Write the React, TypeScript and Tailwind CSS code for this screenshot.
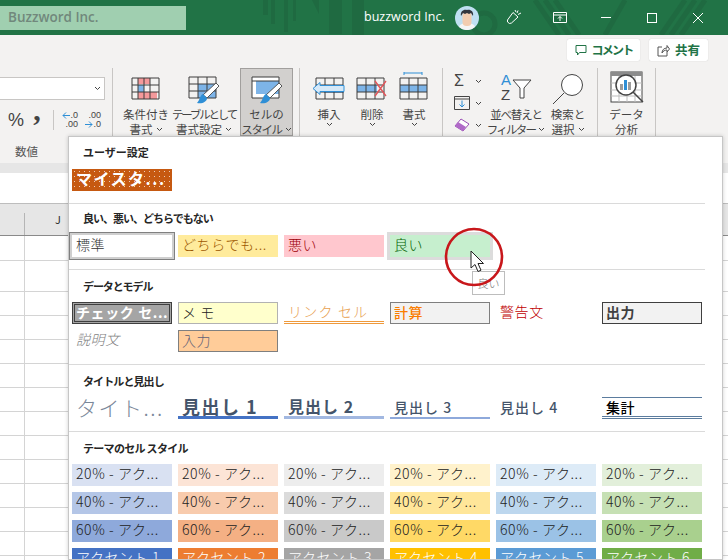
import type { ReactNode } from "react";

const jp = "font-['Noto_Sans_CJK_JP','Noto_Sans',sans-serif]";

function TitleArt() {
  // faint circuit pattern behind the title bar
  return (
    <svg className="absolute left-0 top-0" width="728" height="35" viewBox="0 0 728 35" fill="none">
      <g fill="#1f6a41">
        <rect x="263" y="0" width="5" height="15" />
        <rect x="271" y="0" width="4" height="24" />
        <rect x="284" y="0" width="4" height="32" />
        <rect x="293" y="0" width="3" height="21" />
        <path d="M312 0h7v14z" />
        <rect x="329" y="0" width="13" height="34" />
        <rect x="352" y="0" width="12" height="35" />
      </g>
      <g stroke="#1f6a41" strokeWidth="5">
        <circle cx="484" cy="24" r="11" />
        <path d="M535 0l24 35M545 0l24 35M555 0l24 35M625 0l-20 35M685 0l-24 35M695 0l-24 35M705 0l-24 35" />
      </g>
    </svg>
  );
}

function Avatar() {
  return (
    <svg width="24" height="24" viewBox="0 0 24 24" className="relative">
      <circle cx="12" cy="12" r="12" fill="#bfe0f2" />
      <path d="M4 21c1-3 4-4 8-4s7 1 8 4a12 12 0 0 1-16 0z" fill="#f5f5f5" />
      <rect x="7.5" y="6" width="9" height="14" rx="4" fill="#f3cdb0" />
      <path d="M6 10c-1-5 3-7 6-6 3-1 7 1 6 6l-2-3-2 1-2-1-2 1-2-1z" fill="#33363d" />
    </svg>
  );
}

function CondIcon() {
  return (
    <svg width="30" height="24" viewBox="0 0 30 24" fill="none">
      <rect x="7" y="1" width="12" height="6" fill="#f4999b" />
      <rect x="7" y="8" width="6" height="7" fill="#7db4e8" />
      <rect x="7" y="15" width="19" height="7" fill="#f4999b" />
      <path d="M1 1h27v21H1zM1 8h27M1 15h27M7 1v21M13 1v21M19 1v21" stroke="#3c3c3c" />
    </svg>
  );
}

function Brush() {
  return (
    <g>
      <path d="M15 19l13-12 3 3-12 12z" fill="#fff" stroke="#555" />
      <path d="M9 27c5 1 10-1 10-5l-4-4c-3 1-3 6-6 9z" fill="#2f8fd6" />
    </g>
  );
}

function TableIcon() {
  return (
    <svg width="32" height="28" viewBox="0 0 32 28" fill="none" className="-mb-[3px]">
      <rect x="10" y="8" width="18" height="14" fill="#7db4e8" />
      <path d="M1 1h27v21H1zM1 8h27M1 15h27M10 1v21M19 1v21" stroke="#3c3c3c" />
      <Brush />
    </svg>
  );
}

function StyleIcon() {
  return (
    <svg width="32" height="28" viewBox="0 0 32 28" fill="none" className="-mb-[3px]">
      <rect x="1" y="1" width="27" height="21" fill="#fff" />
      <rect x="5" y="5" width="23" height="13" fill="#7db4e8" />
      <path d="M1 1h27v21H1zM1 5h27" stroke="#3c3c3c" />
      <Brush />
    </svg>
  );
}

function InsertIcon() {
  return (
    <svg width="34" height="24" viewBox="0 0 34 24" fill="none">
      <rect x="12" y="8" width="20" height="8" fill="#7db4e8" />
      <path d="M4 1h27v21H4zM4 8h27M4 15h27M13 1v21M22 1v21" stroke="#3c3c3c" />
      <path d="M1 11.5l7-6v3h24v6H8v3z" fill="#d6e9f8" stroke="#2f8fd6" />
    </svg>
  );
}

function DeleteIcon() {
  return (
    <svg width="32" height="24" viewBox="0 0 32 24" fill="none">
      <rect x="1" y="8" width="20" height="7" fill="#7db4e8" />
      <path d="M1 1h27v21H1zM1 8h27M1 15h27M10 1v21M19 1v21" stroke="#3c3c3c" />
      <path d="M19 4l11 15M30 4L19 19" stroke="#e2555a" strokeWidth="1.4" />
    </svg>
  );
}

function FormatIcon() {
  return (
    <svg width="30" height="30" viewBox="0 0 30 30" fill="none" className="-mb-px">
      <path d="M5 1h18M5 0v3M23 0v3" stroke="#2f8fd6" />
      <rect x="1" y="13" width="27" height="7" fill="#7db4e8" />
      <path d="M1 6h27v21H1zM1 13h27M1 20h27M10 6v21M19 6v21" stroke="#3c3c3c" />
    </svg>
  );
}

function SortIcon() {
  return (
    <svg width="32" height="33" viewBox="0 0 32 33" fill="none" className="-mb-[3px]">
      <text x="1" y="14" fontSize="15" fill="#2f8fd6" fontFamily="Liberation Sans">A</text>
      <text x="1" y="29" fontSize="15" fill="#444" fontFamily="Liberation Sans">Z</text>
      <path d="M13 9h18l-7 8v10h-4V17z" fill="#fff" stroke="#444" />
    </svg>
  );
}

function SearchIcon() {
  return (
    <svg width="32" height="34" viewBox="0 0 32 34" fill="none" className="-mb-[6px]">
      <circle cx="20" cy="12" r="10.5" fill="#fff" stroke="#444" />
      <path d="M12 20L1 31" stroke="#444" />
    </svg>
  );
}

function AnalysisIcon() {
  return (
    <svg width="34" height="33" viewBox="0 0 34 33" fill="none" className="-mb-[3px]">
      <rect x="1" y="1" width="31" height="30" fill="#fff" stroke="#444" />
      <rect x="1" y="1" width="31" height="4" fill="#8c8c8c" />
      <path d="M1 12h31M1 19h31M1 25h31M9 5v26M17 5v26M25 5v26" stroke="#bdbdbd" />
      <circle cx="16" cy="14" r="10" fill="#fff" stroke="#444" strokeWidth="1.5" />
      <rect x="10" y="13" width="3" height="6" fill="#9c9c9c" />
      <rect x="14" y="9" width="3" height="10" fill="#2f8fd6" />
      <rect x="18" y="11" width="3" height="8" fill="#9c9c9c" />
      <path d="M23 21l10 10" stroke="#444" strokeWidth="1.5" />
    </svg>
  );
}

function Caret({ className = "" }: { className?: string }) {
  return (
    <svg width="7" height="5" viewBox="0 0 7 5" fill="none" className={className}>
      <path d="M1 1l2.5 2.5L6 1" stroke="#444" />
    </svg>
  );
}

function Arrow({ flip }: { flip?: boolean }) {
  return (
    <svg width="8" height="7" viewBox="0 0 8 7" fill="none" className={flip ? "-scale-x-100" : ""}>
      <path d="M8 3.5H1M4 .5l-3 3 3 3" stroke="#2f8fd6" />
    </svg>
  );
}

function RibbonButton({ icon, lines, width, active }: { icon: ReactNode; lines: ReactNode[]; width: string; active?: boolean }) {
  return (
    <div
      className={`${width} h-[68px] shrink-0 flex flex-col items-center border ${active ? "bg-[#d2d0ce] border-[#a19f9d]" : "border-transparent"}`}
    >
      <div className="h-[38px] shrink-0 flex items-end justify-center pb-[6px]">{icon}</div>
      <div className="text-[11.5px] leading-[15px] text-[#444] text-center whitespace-nowrap">
        {lines.map((line, i) => (
          <div key={i} className="flex items-center justify-center gap-[3px]">
            {line}
          </div>
        ))}
      </div>
    </div>
  );
}

function Group({ width, children }: { width: string; children: ReactNode }) {
  return <div className={`${width} h-[95px] shrink-0 border-r border-[#c8c6c4] flex`}>{children}</div>;
}

function Ribbon() {
  return (
    <div className="h-[128px] bg-[#f3f2f1] flex flex-col">
      <div className="h-[33px] flex justify-end items-start pt-[4px] pr-[20px] gap-[9px]">
        <div className="w-[73px] h-[22px] bg-white rounded-[2px] shadow-[0_0_1px_#bbb] flex items-center justify-center gap-[5px] text-[12px] font-bold tracking-[-1.8px] text-[#217346]">
          <svg width="12" height="12" viewBox="0 0 12 12" fill="none">
            <path d="M1 1.5h10v7H4.5L2.5 11V8.5H1z" stroke="#217346" />
          </svg>
          コメント
        </div>
        <div className="w-[59px] h-[22px] bg-white rounded-[2px] shadow-[0_0_1px_#bbb] flex items-center justify-center gap-[5px] text-[12.5px] font-bold text-[#217346]">
          <svg width="13" height="13" viewBox="0 0 13 13" fill="none">
            <path d="M5 3H1v9h9V8M5 9c0-3 2-5 5-5V1.5L12.5 5 10 8V6C8 6 6 7 5 9z" stroke="#555" />
          </svg>
          共有
        </div>
      </div>
      <div className="flex">
        <Group width="w-[113px]">
          <div className="w-full">
            <div className="h-[9px]" />
            <div className="w-[105px] h-[23px] bg-white border border-[#c8c6c4] border-l-0 flex items-center justify-end pr-[2px]">
              <Caret className="mr-[1px]" />
            </div>
            <div className="h-[32px] mt-[4px] flex items-center pl-[6px] text-[#444]">
              <span className="w-[20px] text-[18px] font-['Liberation_Sans',sans-serif] text-center">%</span>
              <span className="w-[22px] h-[24px] text-[30px] font-bold text-center leading-[4px] font-['Liberation_Serif',serif]">,</span>
              <span className="w-px h-[20px] bg-[#c8c6c4] ml-[5px]" />
              <span className="flex flex-col w-[17px] items-end text-[9px] leading-[9px] ml-[7px] font-['Liberation_Sans',sans-serif]">
                <span className="flex items-center"><Arrow />.0</span>
                <span>.00</span>
              </span>
              <span className="flex flex-col w-[17px] items-end text-[9px] leading-[9px] ml-[6px] font-['Liberation_Sans',sans-serif]">
                <span>.00</span>
                <span className="flex items-center"><Arrow flip />.0</span>
              </span>
            </div>
            <div className="text-[11.5px] text-[#555] pl-[15px] mt-[7px] leading-[16px]">数値</div>
          </div>
        </Group>
        <Group width="w-[187px]">
          <div className="w-[9px]" />
          <RibbonButton width="w-[48px]" icon={<CondIcon />} lines={["条件付き", <>書式<Caret /></>]} />
          <RibbonButton
            width="w-[68px]"
            icon={<TableIcon />}
            lines={[<span className="tracking-[-2.2px]">テーブルとして</span>, <>書式設定<Caret /></>]}
          />
          <div className="w-[2px]" />
          <RibbonButton
            width="w-[53px]"
            active
            icon={<StyleIcon />}
            lines={["セルの", <span className="flex items-center gap-[3px] tracking-[-1.4px]">スタイル<Caret /></span>]}
          />
        </Group>
        <Group width="w-[143px]">
          <div className="w-[7px]" />
          <RibbonButton width="w-[44px]" icon={<InsertIcon />} lines={["挿入", <Caret />]} />
          <RibbonButton width="w-[42px]" icon={<DeleteIcon />} lines={["削除", <Caret />]} />
          <RibbonButton width="w-[42px]" icon={<FormatIcon />} lines={["書式", <Caret />]} />
        </Group>
        <Group width="w-[155px]">
          <div className="w-[44px] pl-[11px] pt-[5px] flex flex-col gap-[6px] shrink-0">
            <div className="h-[16px] flex items-center gap-[7px] text-[#444]">
              <span className="text-[16px] w-[14px] font-['Liberation_Sans',sans-serif] leading-[16px]">Σ</span>
              <Caret />
            </div>
            <div className="h-[16px] flex items-center gap-[5px]">
              <svg width="16" height="14" viewBox="0 0 16 14" fill="none">
                <path d="M.5.5h15v13H.5zM.5 3h15" stroke="#444" />
                <path d="M8 4.5v6M5.5 8.5L8 11l2.5-2.5" stroke="#2f8fd6" />
              </svg>
              <Caret />
            </div>
            <div className="h-[16px] flex items-center gap-[5px]">
              <svg width="16" height="14" viewBox="0 0 16 14" fill="none">
                <path d="M1 8l6-7 8 5-6 7z" fill="#fff" stroke="#9a4fb5" />
                <path d="M1 8l3-4 8 5-3 4z" fill="#b06ac8" />
              </svg>
              <Caret />
            </div>
          </div>
          <RibbonButton
            width="w-[58px]"
            icon={<SortIcon />}
            lines={[<span className="tracking-[-1.2px]">並べ替えと</span>, <span className="flex items-center gap-[3px] tracking-[-1.8px]">フィルター<Caret /></span>]}
          />
          <RibbonButton width="w-[46px]" icon={<SearchIcon />} lines={["検索と", <>選択<Caret /></>]} />
        </Group>
        <Group width="w-[58px]">
          <RibbonButton width="w-[57px]" icon={<AnalysisIcon />} lines={["データ", "分析"]} />
        </Group>
      </div>
    </div>
  );
}

function Sheet() {
  const rows = ["h-[25px]", "h-[31px]", ...Array<string>(12).fill("h-[24px]")];
  return (
    <div>
      <div className="h-[10px] bg-[#e6e6e6]" />
      <div className="h-[31px] bg-white border-b border-[#bdbdbd]" />
      <div className="h-[32px] bg-[#e6e6e6] border-b border-[#8a8a8a] flex items-end">
        <div className="w-[25px] h-[22px] border-r border-[#b5b5b5]" />
        <div className="w-[36px] h-[26px] text-right text-[11px] text-[#333] leading-[20px]">J</div>
      </div>
      {rows.map((h, i) => (
        <div key={i} className={`bg-white border-b border-[#d4d4d4] ${h}`}>
          <div className="w-[25px] h-full border-r border-[#d4d4d4]" />
        </div>
      ))}
    </div>
  );
}

function Cell({ children, className = "" }: { children?: ReactNode; className?: string }) {
  return <div className={`w-[100px] h-[22px] pl-[4px] leading-[19px] whitespace-nowrap overflow-visible text-[14px] tracking-[0.6px] font-light ${className}`}>{children}</div>;
}

function Section({ title, top, children, last }: { title: string; top: string; children: ReactNode; last?: boolean }) {
  return (
    <div className={`w-[636px] ${last ? "" : "pb-[12px] border-b border-[#dadada]"}`}>
      <div className={`${top} pl-[14px] flex items-center text-[11px] font-semibold text-[#262626]`}>{title}</div>
      <div className="grid grid-cols-[repeat(6,100px)] gap-[6px] pl-[3px]">{children}</div>
    </div>
  );
}

const themeRows = [
  { label: "20% - アク...", colors: ["bg-[#d9e1f2]", "bg-[#fce4d6]", "bg-[#ededed]", "bg-[#fff2cc]", "bg-[#ddebf7]", "bg-[#e2efda]"] },
  { label: "40% - アク...", colors: ["bg-[#b4c6e7]", "bg-[#f8cbad]", "bg-[#dbdbdb]", "bg-[#ffe699]", "bg-[#bdd7ee]", "bg-[#c6e0b4]"] },
  { label: "60% - アク...", colors: ["bg-[#8ea9db]", "bg-[#f4b084]", "bg-[#c9c9c9]", "bg-[#ffd966]", "bg-[#9bc2e6]", "bg-[#a9d08e]"] },
];
const accents = ["bg-[#4472c4]", "bg-[#ed7d31]", "bg-[#a5a5a5]", "bg-[#ffc000]", "bg-[#5b9bd5]", "bg-[#70ad47]"];

function StylesPanel() {
  return (
    <div className={`absolute left-[68px] top-[136px] w-[655px] h-[424px] bg-white border border-[#c6c6c6] shadow-[0_0_4px_#00000030] overflow-hidden ${jp}`}>
      <Section title="ユーザー設定" top="h-[32px] pb-[2px]">
        <Cell className="bg-[#c65911] bg-[radial-gradient(#ffffffb0_0.6px,transparent_0.9px)] bg-[size:5px_5px] text-white !font-bold !text-[16px] !tracking-[1.5px]">マイスタ...</Cell>
      </Section>
      <Section title="良い、悪い、どちらでもない" top="h-[31px] pb-[2px] tracking-[-1px]">
        <Cell className="bg-white shadow-[0_0_0_2px_#cfcfcf,0_0_0_3px_#808080] text-[#333]">標準</Cell>
        <Cell className="bg-[#ffeb9c] text-[#9c5700]">どちらでも...</Cell>
        <Cell className="bg-[#ffc7ce] text-[#9c0006]">悪い</Cell>
        <Cell className="bg-[#c6efce] text-[#006100] shadow-[0_0_0_3px_#dcdcdc]">良い</Cell>
      </Section>
      <Section title="データとモデル" top="h-[32px] tracking-[-1.1px]">
        <Cell className="bg-[#a5a5a5] border-[3px] border-double border-[#3f3f3f] !pl-[1px] text-white !font-bold !leading-[15px]">チェック セ...</Cell>
        <Cell className="bg-[#ffffcc] border border-[#b2b2b2] !pl-[3px] text-[#222]">メ モ</Cell>
        <Cell className="shadow-[inset_0_-1px_0_#ef9a3c,inset_0_-2px_0_#fff,inset_0_-3px_0_#ef9a3c] text-[#e8a050] !tracking-[1.2px]">リンク セル</Cell>
        <Cell className="bg-[#f2f2f2] border border-[#7f7f7f] !pl-[3px] text-[#fa7d00] !font-medium">計算</Cell>
        <Cell className="text-[#c00000]">警告文</Cell>
        <Cell className="bg-[#f2f2f2] border border-[#3f3f3f] !pl-[3px] text-[#3f3f3f] !font-bold">出力</Cell>
        <Cell className="text-[#7f7f7f] italic">説明文</Cell>
        <Cell className="bg-[#ffcc99] border border-[#7f7f7f] !pl-[3px] text-[#5f5f76]">入力</Cell>
      </Section>
      <Section title="タイトルと見出し" top="h-[32px] tracking-[-0.9px]">
        <Cell className="text-[#7a8799] !text-[21px] !leading-[20px] !tracking-[1.5px]">タイト...</Cell>
        <Cell className="border-b-[3px] border-[#4472c4] text-[#44546a] !font-bold !text-[18px] !leading-[18px] !tracking-[1.5px]">見出し 1</Cell>
        <Cell className="border-b-[3px] border-[#a2b8e1] text-[#44546a] !font-bold !text-[16px] !leading-[19px] !tracking-[1px]">見出し 2</Cell>
        <Cell className="border-b-2 border-[#8ea9db] text-[#44546a] !font-medium !text-[14px] !leading-[20px] !tracking-[1px]">見出し 3</Cell>
        <Cell className="text-[#44546a] !font-medium !text-[14px] !leading-[20px] !tracking-[1px]">見出し 4</Cell>
        <Cell className="shadow-[inset_0_1px_0_#5b7c9e,inset_0_-1px_0_#5b7c9e,inset_0_-2px_0_#fff,inset_0_-3px_0_#5b7c9e] text-black !font-medium !leading-[21px]">集計</Cell>
      </Section>
      <Section title="テーマのセル スタイル" top="h-[32px] tracking-[-0.7px]" last>
        {themeRows.map((row) =>
          row.colors.map((c) => (
            <Cell key={row.label + c} className={`${c} text-[#222]`}>
              {row.label}
            </Cell>
          )),
        )}
        {accents.map((c, i) => (
          <Cell key={c} className={`${c} text-white`}>
            アクセント {i + 1}
          </Cell>
        ))}
      </Section>
    </div>
  );
}

export default function App() {
  return (
    <div className={`relative w-[728px] h-[560px] overflow-hidden bg-white ${jp}`}>
      <div className="relative h-[35px] bg-[#217346] flex items-center overflow-hidden">
        <TitleArt />
        <div className="relative w-[186px] h-[24px] bg-[#a0cfb0] pl-[8px] flex items-center text-[13.5px] font-semibold text-[#71887c] font-['Open_Sans',sans-serif]">
          Buzzword Inc.
        </div>
        <div className="relative ml-[178px] text-[12.5px] text-white font-['Open_Sans',sans-serif] w-[91px]">buzzword Inc.</div>
        <Avatar />
        <svg width="17" height="17" viewBox="0 0 17 17" fill="none" className="relative ml-[27px]">
          <path d="M1.5 11L7 3.5l5 4.5-6.5 6-2 .5-2-1.5zM9 1l1 2M12 1.5L11 4M15 4l-3 1.5" stroke="#fff" />
        </svg>
        <svg width="14" height="11" viewBox="0 0 14 11" fill="none" className="relative ml-[30px]">
          <path d="M.5.5h13v10H.5zM.5 3h13M7 9V4.5M5 6.5l2-2 2 2" stroke="#fff" />
        </svg>
        <div className="relative ml-[34px] w-[10px] h-px bg-white" />
        <div className="relative ml-[36px] w-[10px] h-[10px] border border-white" />
        <svg width="10" height="10" viewBox="0 0 10 10" fill="none" className="relative ml-[36px]">
          <path d="M0 0l10 10M10 0L0 10" stroke="#fff" />
        </svg>
      </div>
      <Ribbon />
      <Sheet />
      <StylesPanel />
      {/* highlight ring, mouse pointer and tooltip lie over the gallery */}
      <div className="absolute left-[472px] top-[271px] w-[33px] h-[24px] bg-white border border-[#bdbdbd] text-[11px] text-[#777] flex items-center justify-center font-light">良い</div>
      <svg className="absolute left-[440px] top-[222px]" width="70" height="70" viewBox="0 0 70 70" fill="none">
        <circle cx="34" cy="35" r="28" stroke="#c8171b" strokeWidth="2.6" />
        <path d="M31 29v17l4-3.5 3 7 3-1.3-3-6.7h5.5z" fill="#fff" stroke="#222" strokeWidth="1" />
      </svg>
    </div>
  );
}
